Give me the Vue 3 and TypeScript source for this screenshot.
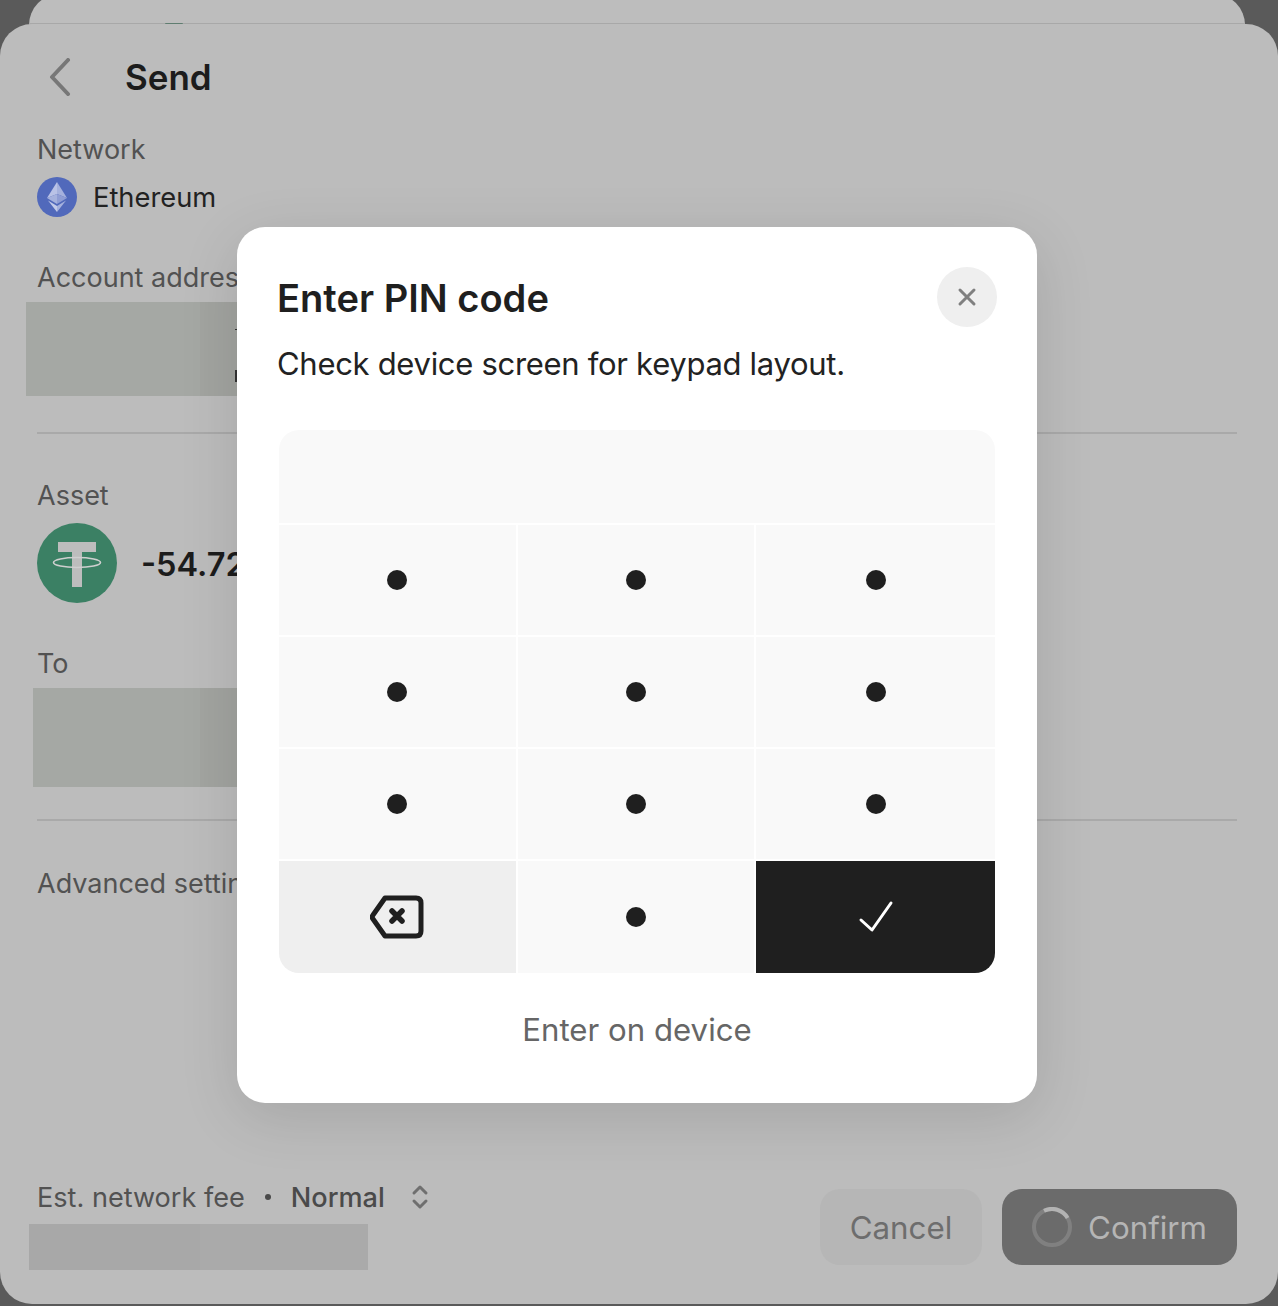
<script setup lang="ts">
const keys: { id: number; kind: 'dot' | 'back' | 'ok' }[] = [
  { id: 1, kind: 'dot' }, { id: 2, kind: 'dot' }, { id: 3, kind: 'dot' },
  { id: 4, kind: 'dot' }, { id: 5, kind: 'dot' }, { id: 6, kind: 'dot' },
  { id: 7, kind: 'dot' }, { id: 8, kind: 'dot' }, { id: 9, kind: 'dot' },
  { id: 10, kind: 'back' }, { id: 11, kind: 'dot' }, { id: 12, kind: 'ok' },
]
</script>

<template>
  <div class="page">
    <div class="under-sheet"><i class="peek"></i></div>
    <section class="sheet">
      <header class="head">
        <svg class="back" width="24" height="38" viewBox="0 0 24 38" fill="none">
          <path d="M20 2 L4 19 L20 36" stroke="#777" stroke-width="4" stroke-linecap="round" stroke-linejoin="round" />
        </svg>
        <h1 class="title">Send</h1>
      </header>

      <div class="label label-network">Network</div>
      <div class="network">
        <svg width="40" height="40" viewBox="0 0 40 40">
          <circle cx="20" cy="20" r="20" fill="#5169bb" />
          <path d="M20 5 L20 17 L30 21 Z" fill="#a5b1dd" />
          <path d="M20 5 L20 17 L10 21 Z" fill="#b9c2e6" />
          <path d="M20 17 L30 21 L20 27 Z" fill="#8f9dd4" />
          <path d="M20 17 L10 21 L20 27 Z" fill="#a5b1dd" />
          <path d="M20 29 L29 23.5 L20 35 Z" fill="#a5b1dd" />
          <path d="M20 29 L11 23.5 L20 35 Z" fill="#c3cbe9" />
        </svg>
        <span>Ethereum</span>
      </div>

      <div class="label label-account">Account address</div>
      <div class="blur blur-account"><i class="tick tick-a"></i><i class="tick tick-b"></i></div>
      <div class="rule rule-a"></div>

      <div class="label label-asset">Asset</div>
      <div class="asset">
        <svg width="80" height="80" viewBox="0 0 80 80">
          <circle cx="40" cy="40" r="40" fill="#3b8064" />
          <path d="M21 19 H59 V29 H45 V64 H35 V29 H21 Z" fill="#bdbdbd" />
          <ellipse cx="40" cy="39.5" rx="23.5" ry="5" fill="none" stroke="#cfcfcf" stroke-width="1.6" />
        </svg>
        <span class="amount">-54.72</span>
      </div>

      <div class="label label-to">To</div>
      <div class="blur blur-to"></div>
      <div class="rule rule-b"></div>

      <div class="label label-adv">Advanced settings</div>

      <footer class="foot">
        <div class="fee">
          <div class="fee-line">
            <span>Est. network fee</span>
            <i class="sep"></i>
            <span class="speed">Normal</span>
            <svg width="18" height="26" viewBox="0 0 18 26" fill="none">
              <path d="M3 9 L9 3 L15 9 M3 17 L9 23 L15 17" stroke="#6f6f6f" stroke-width="3" stroke-linecap="round" stroke-linejoin="round" />
            </svg>
          </div>
          <div class="blur-fee"></div>
        </div>
        <div class="actions">
          <div class="btn btn-cancel"><span>Cancel</span></div>
          <div class="btn btn-confirm">
            <svg width="40" height="40" viewBox="0 0 40 40" fill="none">
              <circle cx="20" cy="20" r="18" stroke="#808080" stroke-width="4" />
              <path d="M12 3.8 A18 18 0 0 1 35.6 11" stroke="#b3b3b3" stroke-width="4" />
            </svg>
            <span>Confirm</span>
          </div>
        </div>
      </footer>
    </section>

    <div class="modal">
      <div class="modal-head">
        <h2 class="modal-title">Enter PIN code</h2>
        <div class="close">
          <svg width="20" height="20" viewBox="0 0 20 20" fill="none">
            <path d="M3 3 L17 17 M17 3 L3 17" stroke="#808080" stroke-width="3" stroke-linecap="round" />
          </svg>
        </div>
      </div>
      <p class="modal-sub">Check device screen for keypad layout.</p>
      <div class="pad">
        <div class="pad-display"></div>
        <div v-for="k in keys" :key="k.id" class="key" :class="'key-' + k.kind">
          <i v-if="k.kind === 'dot'" class="dot"></i>
          <svg v-else-if="k.kind === 'back'" width="54" height="44" viewBox="0 0 54 44" fill="none">
            <path d="M15 3 H46 Q51 3 51 8 V36 Q51 41 46 41 H15 L3 24 Q1.5 22 3 20 Z" stroke="#1f1f1f" stroke-width="5" stroke-linejoin="round" />
            <path d="M22 16 L32 26 M32 16 L22 26" stroke="#1f1f1f" stroke-width="5.5" stroke-linecap="round" />
          </svg>
          <svg v-else width="36" height="34" viewBox="0 0 36 34" fill="none">
            <path d="M3 20 L14 30 L33 3" stroke="#fff" stroke-width="3" stroke-linecap="round" stroke-linejoin="round" />
          </svg>
        </div>
      </div>
      <div class="modal-link">Enter on device</div>
    </div>
  </div>
</template>

<style>
html, body { margin: 0; padding: 0; }
</style>

<style scoped>
.page {
  position: relative;
  width: 1278px;
  height: 1306px;
  overflow: hidden;
  background: #5a5a5a;
  font-family: Inter, "Liberation Sans", sans-serif;
  color: #1f1f1f;
}
.under-sheet {
  position: absolute;
  left: 29px;
  right: 33px;
  top: -6px;
  height: 31px;
  background: #bdbdbd;
  border-bottom: 2px solid #a8a8a8;
  box-sizing: border-box;
  border-radius: 36px 36px 0 0;
}
.peek {
  position: absolute;
  left: 136px;
  bottom: -1px;
  width: 18px;
  height: 1px;
  border-radius: 9px 9px 0 0;
  background: #5f7d70;
}
.sheet {
  position: relative;
  box-sizing: border-box;
  margin-top: 24px;
  height: 1280px;
  padding: 0 41px 0 37px;
  background: #bcbcbc;
  border-radius: 32px;
  display: flex;
  flex-direction: column;
}
.head { display: flex; align-items: center; height: 106px; }
.back { margin-left: 11px; }
.title { margin: 0 0 0 53px; font-size: 35px; font-weight: 600; line-height: 56px; color: #1c1c1c; }
.label { font-size: 27px; line-height: 36px; color: #525252; white-space: nowrap; width: 200px; overflow: visible; }
.label-network { margin-top: 2px; }
.network { display: flex; align-items: center; gap: 16px; margin-top: 9px; height: 40px; font-size: 27.3px; color: #222; }
.label-account { margin-top: 43px; }
.blur { position: relative; background: linear-gradient(90deg, #a5a8a4 0, #a5a8a4 174px, #a2a4a0 174px); }
.blur-account { margin: 6px 0 0 -11px; height: 94px; width: 300px; }
.tick { position: absolute; left: 209px; width: 2px; background: #333; }
.tick-a { top: 27px; height: 1px; }
.tick-b { top: 68px; height: 12px; }
.rule { height: 2px; background: #a9a9a9; }
.rule-a { margin-top: 36px; }
.label-asset { margin-top: 44px; }
.asset { display: flex; align-items: center; gap: 24px; margin-top: 9px; }
.amount { padding-top: 2px; font-size: 32.5px; font-weight: 600; color: #1c1c1c; }
.label-to { margin-top: 43px; }
.blur-to { margin: 6px 0 0 -4px; height: 99px; width: 300px; background: linear-gradient(90deg, #a5a8a4 0, #a5a8a4 167px, #a2a4a0 167px); }
.rule-b { margin-top: 32px; }
.label-adv { margin-top: 45px; }
.foot { margin-top: auto; height: 125px; display: flex; justify-content: space-between; }
.fee-line { display: flex; align-items: center; height: 36px; font-size: 27.1px; color: #525252; white-space: nowrap; }
.sep { width: 6px; height: 6px; margin: 0 20px; border-radius: 50%; background: #4a4a4a; }
.speed { font-weight: 500; color: #4a4a4a; margin-right: 26px; }
.blur-fee { margin: 9px 0 0 -8px; width: 339px; height: 46px; background: linear-gradient(90deg, #a8a8a8 0, #a8a8a8 171px, #aaaaaa 171px); }
.actions { display: flex; gap: 20px; margin-top: 10px; height: 76px; }
.btn { box-sizing: border-box; height: 76px; border-radius: 20px; display: flex; align-items: center; justify-content: center; font-size: 31.3px; }
.btn span { margin-top: 2px; }
.btn-cancel { width: 162px; background: #b6b6b6; color: #6d6d6d; }
.btn-confirm { width: 235px; gap: 16px; background: #6b6b6b; color: #b5b5b5; }
.modal {
  position: absolute;
  left: 237px;
  top: 227px;
  width: 800px;
  height: 876px;
  box-sizing: border-box;
  padding: 40px 40px 0 40px;
  background: #fff;
  border-radius: 28px;
  box-shadow: 0 14px 60px rgba(0, 0, 0, 0.12);
}
.modal-head { display: flex; justify-content: space-between; align-items: flex-start; height: 60px; }
.modal-title { margin: 8px 0 0; font-size: 38.1px; line-height: 46px; font-weight: 600; color: #1f1f1f; }
.close { width: 60px; height: 60px; border-radius: 50%; background: #efefef; display: flex; align-items: center; justify-content: center; }
.modal-sub { margin: 18px 0 0; font-size: 31px; line-height: 38px; letter-spacing: -0.3px; color: #222; white-space: nowrap; }
.pad {
  margin: 47px 0 0 2px;
  width: 716px;
  display: grid;
  grid-template-columns: 237px 236px 239px;
  grid-template-rows: 93px 110px 110px 110px 112px;
  gap: 2px;
  border-radius: 20px;
  overflow: hidden;
}
.pad-display { grid-column: 1 / 4; background: #f9f9f9; }
.key { display: flex; align-items: center; justify-content: center; background: #f9f9f9; }
.key:nth-child(3n + 2) { padding-right: 1px; }
.key-back { background: #efefef; }
.key-ok { background: #1f1f1f; }
.dot { width: 20px; height: 20px; border-radius: 50%; background: #1f1f1f; }
.modal-link { margin-top: 38px; text-align: center; font-size: 31.2px; line-height: 38px; color: #666; }
</style>
